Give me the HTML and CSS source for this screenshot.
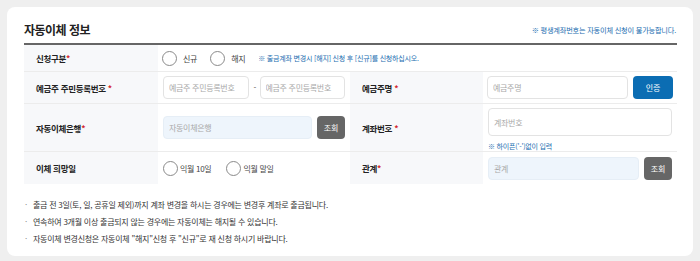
FILE: index.html
```html
<!DOCTYPE html>
<html lang="ko">
<head>
    <meta charset="UTF-8">
    <meta name="viewport" content="width=device-width, initial-scale=1.0">
    <title>자동이체 정보</title>
    <link rel="stylesheet" href="styles.css">
</head>
<body>
    <section class="card">
        <div class="card-head">
            <h2 class="card-title">자동이체 정보</h2>
            <p class="head-note">※ 평생계좌번호는 자동이체 신청이 불가능합니다.</p>
        </div>

        <div class="form-grid">
            <!-- 신청구분 -->
            <div class="cell label">신청구분<em>*</em></div>
            <div class="cell field span-3">
                <label class="radio"><span class="dot"></span>신규</label>
                <label class="radio"><span class="dot"></span>해지</label>
                <span class="blue-note">※ 출금계좌 변경시 [해지] 신청 후 [신규]를 신청하십시오.</span>
            </div>

            <!-- 주민등록번호 / 예금주명 -->
            <div class="cell label">예금주 주민등록번호&nbsp;<em>*</em></div>
            <div class="cell field">
                <input class="input" type="text" placeholder="예금주 주민등록번호">
                <span class="dash">-</span>
                <input class="input" type="text" placeholder="예금주 주민등록번호">
            </div>
            <div class="cell label">예금주명&nbsp;<em>*</em></div>
            <div class="cell field">
                <input class="input" type="text" placeholder="예금주명">
                <button class="btn btn-blue" type="button">인증</button>
            </div>

            <!-- 자동이체은행 / 계좌번호 -->
            <div class="cell label">자동이체은행<em>*</em></div>
            <div class="cell field">
                <input class="input readonly" type="text" placeholder="자동이체은행" readonly>
                <button class="btn btn-gray" type="button">조회</button>
            </div>
            <div class="cell label">계좌번호&nbsp;<em>*</em></div>
            <div class="cell field stack">
                <input class="input" type="text" placeholder="계좌번호">
                <span class="blue-note">※ 하이픈('-')없이 입력</span>
            </div>

            <!-- 이체 희망일 / 관계 -->
            <div class="cell label last">이체 희망일</div>
            <div class="cell field last">
                <label class="radio tight"><span class="dot"></span>익월 10일</label>
                <label class="radio tight"><span class="dot"></span>익월 말일</label>
            </div>
            <div class="cell label last">관계<em>*</em></div>
            <div class="cell field last">
                <input class="input readonly" type="text" placeholder="관계" readonly>
                <button class="btn btn-gray" type="button">조회</button>
            </div>
        </div>

        <ul class="notes">
            <li>출금 전 3일(토, 일, 공휴일 제외)까지 계좌 변경을 하시는 경우에는 변경후 계좌로 출금됩니다.</li>
            <li>연속하여 3개월 이상 출금되지 않는 경우에는 자동이체는 해지될 수 있습니다.</li>
            <li>자동이체 변경신청은 자동이체 "해지"신청 후 "신규"로 재 신청 하시기 바랍니다.</li>
        </ul>
    </section>
</body>
</html>
```

FILE: styles.css
```css
/* --- 기본 --- */
:root {
    --font-family: "Noto Sans CJK KR", "Noto Sans", sans-serif;
    --text-color: #222;
    --blue: #1a6db0;
    --line: #ececec;
    --label-bg: #f7f8fa;
}

body {
    margin: 0;
    padding: 7px;
    background-color: #efefef;
    font-family: var(--font-family);
    color: var(--text-color);
}

/* --- 카드 --- */
.card {
    background: #fff;
    border-radius: 8px;
    padding: 0 16px 10px 17px;
    width: 653px;
    height: 239px;
}

.card-head {
    display: flex;
    justify-content: space-between;
    align-items: center;
    padding: 15px 0 5px;
    border-bottom: 2px solid #666;
}
.card-title {
    margin: 0;
    font-size: 12px;
    line-height: 16px;
    font-weight: 700;
    letter-spacing: -0.5px;
}
.head-note {
    margin: 0 1px 0 0;
    font-size: 7.2px;
    color: var(--blue);
    letter-spacing: -0.2px;
}

/* --- 입력 표 --- */
.form-grid {
    display: grid;
    grid-template-columns: 134px 192px 133px 1fr;
    grid-template-rows: 27px 32px 48px 32px;
}

.cell {
    display: flex;
    align-items: center;
    border-bottom: 1px solid var(--line);
    font-size: 8px;
    letter-spacing: -0.3px;
}
.cell.last {
    border-bottom: 0;
}

.label {
    background: var(--label-bg);
    padding-left: 12px;
    font-size: 8.5px;
    font-weight: 700;
}
.label em {
    font-style: normal;
    color: #d4262b;
}

.field {
    padding: 0 4px;
    gap: 5px;
}
.field.span-3 {
    grid-column: span 3;
}
.field.stack {
    flex-direction: column;
    align-items: stretch;
    justify-content: flex-start;
    padding: 4px 5px 0;
    gap: 5px;
}
.form-grid > .field:nth-child(4n),
.form-grid > .field:last-child {
    padding-left: 5px;
    padding-right: 5px;
}

.input {
    flex: 1;
    min-width: 0;
    height: 23px;
    box-sizing: border-box;
    border: 1px solid #e3e3e3;
    border-radius: 4px;
    padding: 0 5px;
    font-family: var(--font-family);
    font-size: 8px;
    letter-spacing: -0.3px;
    color: #333;
    background: #fff;
}
.input::placeholder {
    color: #a9a9a9;
}
.input.readonly {
    background: #eef5fc;
    border-color: #e6eef6;
}

.dash {
    color: #555;
    width: 1px;
    text-align: center;
}

.btn {
    height: 23px;
    border: 0;
    border-radius: 4px;
    padding: 0;
    font-family: var(--font-family);
    font-size: 8px;
    color: #fff;
    cursor: pointer;
}
.btn-blue {
    width: 40px;
    background: #0b6db3;
}
.btn-gray {
    width: 28px;
    background: #666;
}

/* --- 라디오 --- */
.radio {
    display: inline-flex;
    align-items: center;
    gap: 6px;
    margin-right: 8px;
    color: #444;
    font-weight: 400;
}
.radio.tight {
    gap: 2px;
    margin-right: 10px;
}
.radio .dot {
    width: 15px;
    height: 15px;
    box-sizing: border-box;
    border: 1px solid #8a8a8a;
    border-radius: 50%;
    background: #fff;
}

.blue-note {
    color: var(--blue);
    font-size: 7px;
    letter-spacing: -0.2px;
}

/* --- 안내 문구 --- */
.notes {
    list-style: none;
    margin: 12px 0 0;
    padding: 0;
    font-size: 8px;
    color: #333;
    letter-spacing: -0.25px;
}
.notes li {
    line-height: 17px;
    padding-left: 9px;
    position: relative;
}
.notes li::before {
    content: "·";
    position: absolute;
    left: 1px;
    color: #888;
}
```
